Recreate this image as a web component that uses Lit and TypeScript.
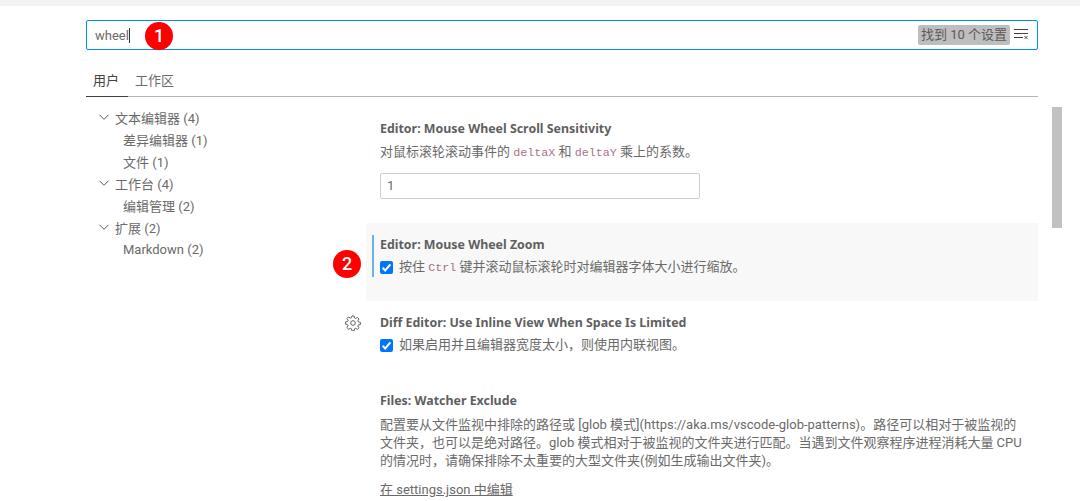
import { LitElement, css, html, svg } from "lit";
import { customElement } from "lit/decorators.js";

const chevron = svg`<svg class="chevron" width="16" height="16" viewBox="0 0 16 16" fill="none"><path d="M3.600 5.900 8 10.300l4.400-4.400" stroke="#5a5a5a" stroke-width="1"/></svg>`;

const tick = html`<span class="check"><svg width="13" height="13" viewBox="0 0 13 13" fill="none"><path d="M2.600 6.800 5.200 9.500 10.400 3.400" stroke="#fff" stroke-width="2"/></svg></span>`;

const gear = html`<svg class="gear" width="16" height="16" viewBox="0 0 16 16" fill="none" stroke="#616161" stroke-width="1"><circle cx="8" cy="8" r="2.300"/><path d="M6.900 1h2.200l.4 2 1.200.5 1.700-1.100 1.600 1.600-1.100 1.700.5 1.200 2 .4v2.200l-2 .4-.5 1.200 1.100 1.700-1.600 1.600-1.700-1.100-1.200.5-.4 2H6.900l-.4-2-1.200-.5-1.700 1.100L2 12.400l1.100-1.700-.5-1.200-2-.4V6.900l2-.4.5-1.200L2 3.600 3.600 2l1.700 1.100 1.200-.5z"/></svg>`;

const clearIcon = html`<svg class="clear" width="16" height="16" viewBox="0 0 16 16" fill="none" stroke="#424242"><path d="M1 3.500h14M1 7.500h14M1 11.500h9"/><path d="M11.500 10l3 3m0-3-3 3" stroke-width=".9"/></svg>`;

const tree = [
  { label: "文本编辑器 (4)", top: true },
  { label: "差异编辑器 (1)", top: false },
  { label: "文件 (1)", top: false },
  { label: "工作台 (4)", top: true },
  { label: "编辑管理 (2)", top: false },
  { label: "扩展 (2)", top: true },
  { label: "Markdown (2)", top: false },
];

@customElement("app-root")
export class AppRoot extends LitElement {
  static styles = css`
    :host {
      display: block;
      position: relative;
      width: 1080px;
      height: 501px;
      overflow: hidden;
      background: #fff;
      font-family: Roboto, "Noto Sans CJK SC", sans-serif;
      font-size: 13px;
      color: #6a6a6a;
    }

    * {
      box-sizing: border-box;
    }

    .topbar {
      height: 6px;
      background: #f3f3f3;
    }

    .page {
      display: flex;
      flex-direction: column;
      width: 952px;
      margin: 14px 0 0 86px;
    }

    .search {
      display: flex;
      align-items: center;
      height: 30px;
      padding: 0 8px;
      border: 1px solid #0090f1;
      border-radius: 2px;
    }

    .query {
      border-right: 1px solid #333;
      line-height: 15px;
      height: 15px;
    }

    .count {
      margin-left: auto;
      padding: 0 3px;
      background: #bebebe;
      border-radius: 2px;
      line-height: 20px;
      color: #5a5a5a;
    }

    .clear {
      margin: -3px 0 0 3px;
    }

    .tabs {
      display: flex;
      margin-top: 20px;
      height: 27px;
      border-bottom: 1px solid #b4b4b4;
    }

    .tab {
      height: 27px;
      padding: 0 8px 0 7px;
      line-height: 21px;
    }

    .tab.active {
      padding-right: 9px;
      color: #424242;
      border-bottom: 1px solid #424242;
    }

    .body {
      display: flex;
      margin-top: 9px;
    }

    .tree {
      width: 280px;
      flex: none;
    }

    .row {
      display: flex;
      align-items: center;
      height: 22px;
      padding-left: 37px;
    }

    .row.top {
      padding-left: 10px;
      gap: 3px;
    }

    .settings {
      flex: 1;
      min-width: 0;
      padding-top: 14px;
    }

    .setting {
      position: relative;
      padding: 0 14px;
    }

    .setting.focused {
      height: 78px;
      margin-top: 24px;
      padding-top: 13px;
      background: #f8f8f8;
    }

    .setting.focused::before {
      content: "";
      position: absolute;
      left: 6px;
      top: 12px;
      width: 2px;
      height: 42px;
      background: #6cb2ea;
    }

    .title {
      font-family: "Noto Sans", "Noto Sans CJK SC", sans-serif;
      font-weight: 700;
      font-size: 12.4px;
      line-height: 18px;
      color: #5f5f5f;
    }

    .desc {
      margin-top: 5px;
      line-height: 18px;
    }

    code {
      font-family: "Liberation Mono", monospace;
      font-size: 11.7px;
      color: #a96f8a;
    }

    .field {
      width: 320px;
      height: 26px;
      margin-top: 11px;
      padding: 0 6px;
      line-height: 24px;
      border: 1px solid #cecece;
      border-radius: 2px;
    }

    .bool {
      display: flex;
      align-items: center;
      gap: 6px;
      margin-top: 4px;
      line-height: 18px;
    }

    .check {
      display: flex;
      align-items: center;
      justify-content: center;
      width: 13px;
      height: 13px;
      border-radius: 2px;
      background: #0075ff;
    }

    .gear {
      position: absolute;
      left: -21px;
      top: 1px;
    }

    .diff {
      margin-top: 13px;
    }

    .watcher {
      margin-top: 38px;
    }

    .watcher .desc {
      width: 645px;
      margin-top: 6px;
    }

    .link {
      margin-top: 11px;
      line-height: 18px;
      text-decoration: underline;
    }

    .scrollbar {
      position: absolute;
      left: 1052px;
      top: 107px;
      width: 10px;
      height: 121px;
      background: #c1c1c1;
    }

    .badge {
      position: absolute;
      width: 28px;
      height: 28px;
      border-radius: 50%;
      background: #ff0000;
      color: #fff;
      font-size: 18px;
      font-weight: 500;
      line-height: 28px;
      text-align: center;
    }
  `;

  render() {
    return html`
      <div class="topbar"></div>
      <div class="page">
        <div class="search">
          <span class="query">wheel</span>
          <span class="count">找到 10 个设置</span>
          ${clearIcon}
        </div>
        <div class="tabs">
          <div class="tab active">用户</div>
          <div class="tab">工作区</div>
        </div>
        <div class="body">
          <div class="tree">
            ${tree.map(
              (item) => html`
                <div class="row ${item.top ? "top" : ""}">
                  ${item.top ? chevron : null}${item.label}
                </div>
              `,
            )}
          </div>
          <div class="settings">
            <div class="setting">
              <div class="title">Editor: Mouse Wheel Scroll Sensitivity</div>
              <div class="desc">
                对鼠标滚轮滚动事件的 <code>deltaX</code> 和
                <code>deltaY</code> 乘上的系数。
              </div>
              <div class="field">1</div>
            </div>
            <div class="setting focused">
              <div class="title">Editor: Mouse Wheel Zoom</div>
              <div class="bool">
                ${tick}
                <span>按住 <code>Ctrl</code> 键并滚动鼠标滚轮时对编辑器字体大小进行缩放。</span>
              </div>
            </div>
            <div class="setting diff">
              ${gear}
              <div class="title">Diff Editor: Use Inline View When Space Is Limited</div>
              <div class="bool">
                ${tick}
                <span>如果启用并且编辑器宽度太小，则使用内联视图。</span>
              </div>
            </div>
            <div class="setting watcher">
              <div class="title">Files: Watcher Exclude</div>
              <div class="desc">
                配置要从文件监视中排除的路径或 [glob 模式](https://aka.ms/vscode-glob-patterns)。路径可以相对于被监视的文件夹，也可以是绝对路径。glob 模式相对于被监视的文件夹进行匹配。当遇到文件观察程序进程消耗大量 CPU 的情况时，请确保排除不太重要的大型文件夹(例如生成输出文件夹)。
              </div>
              <div class="link">在 settings.json 中编辑</div>
            </div>
          </div>
        </div>
      </div>
      <div class="scrollbar"></div>
      <div class="badge" style="left:145px;top:22px">1</div>
      <div class="badge" style="left:333px;top:250px">2</div>
    `;
  }
}
